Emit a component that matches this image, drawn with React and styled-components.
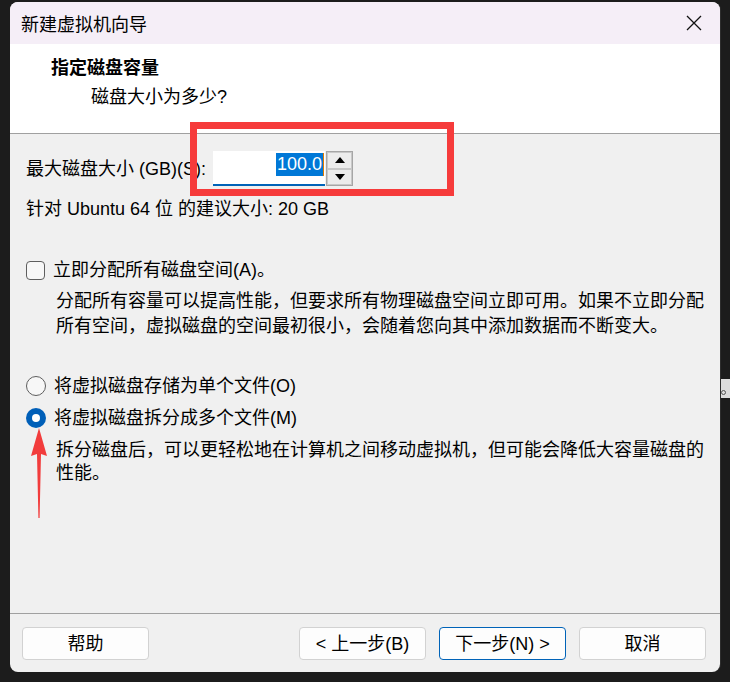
import React from "react";
import styled, { createGlobalStyle } from "styled-components";

const Global = createGlobalStyle`
  html, body { margin: 0; padding: 0; background: #1c1c1c; }
  body { font-family: "Liberation Sans", "Noto Sans CJK SC", sans-serif; }
  * { box-sizing: border-box; }
`;

const Page = styled.div`
  position: relative;
  width: 730px;
  height: 682px;
  padding: 2px 0 0 10px;
  background: #1c1c1c;
  overflow: hidden;
`;

const Window = styled.div`
  width: 710px;
  height: 670px;
  border-radius: 8px;
  overflow: hidden;
  display: flex;
  flex-direction: column;
  background: #f0f0f0;
  color: #000;
  font-size: 18px;
  box-shadow: 1px 0 0 #2e2e2e;
`;

const TitleBar = styled.div`
  height: 42px;
  flex: none;
  display: flex;
  align-items: center;
  justify-content: space-between;
  padding: 0 18px 0 11px;
  background: #f5eef7;
`;

const TitleText = styled.div`
  font-family: "Noto Sans CJK SC", sans-serif;
  font-size: 18px;
  line-height: 24px;
`;

const CloseIcon = styled.svg`
  width: 16px;
  height: 16px;
  display: block;
`;

const Header = styled.div`
  height: 90px;
  flex: none;
  background: #fff;
  border-bottom: 1px solid #a0a0a0;
  padding: 12px 0 0 41px;
`;

const HeaderTitle = styled.div`
  font-weight: 700;
  line-height: 24px;
`;

const HeaderSub = styled.div`
  margin-top: 5px;
  padding-left: 40px;
  line-height: 24px;
`;

const Body = styled.div`
  flex: 1;
  padding: 17px 16px 0 16px;
  display: flex;
  flex-direction: column;
`;

const SizeRow = styled.div`
  display: flex;
  align-items: center;
  height: 35px;
`;

const FieldLabel = styled.div`
  width: 187px;
  line-height: 24px;
  white-space: nowrap;
`;

const InputBox = styled.div`
  width: 112px;
  height: 35px;
  background: #fff;
  border-bottom: 2px solid #0063b8;
  display: flex;
  justify-content: flex-end;
  align-items: flex-start;
  padding: 2px 1px 0 0;
`;

const Selected = styled.span`
  background: #0078d7;
  color: #fff;
  line-height: 23px;
  height: 23px;
  padding: 0 1px;
`;

const Caret = styled.span`
  width: 1px;
  height: 23px;
  background: #e07b00;
`;

const Spin = styled.div`
  width: 27px;
  height: 35px;
  margin-left: 1px;
  border: 1px solid #a6a6a6;
  display: flex;
  flex-direction: column;
  background: #f3f3f3;
`;

const SpinBtn = styled.div`
  flex: 1;
  display: flex;
  align-items: center;
  justify-content: center;
  border: 1px solid #c8c8c8;
  background: #ececec;
`;

const Tri = styled.div`
  width: 0;
  height: 0;
  border-left: 5px solid transparent;
  border-right: 5px solid transparent;
  ${(p) => (p.$up ? "border-bottom: 6px solid #000;" : "border-top: 6px solid #000;")}
`;

const Line = styled.div`
  margin-top: ${(p) => p.$mt}px;
  line-height: 24px;
`;

const OptionRow = styled.div`
  margin-top: ${(p) => p.$mt}px;
  height: 24px;
  display: flex;
  align-items: center;
  gap: 8px;
  line-height: 24px;
`;

const CheckBox = styled.div`
  width: 19px;
  height: 19px;
  border: 1px solid #5e5e5e;
  border-radius: 4px;
  background: #f7f7f7;
`;

const Radio = styled.div`
  width: 20px;
  height: 20px;
  border-radius: 50%;
  display: flex;
  align-items: center;
  justify-content: center;
  ${(p) =>
    p.$checked
      ? "background: #005fb8; border: none;"
      : "background: #f7f7f7; border: 1px solid #5e5e5e;"}
`;

const Dot = styled.div`
  width: 8px;
  height: 8px;
  border-radius: 50%;
  background: #fff;
`;

const Desc = styled.div`
  margin-top: ${(p) => p.$mt}px;
  padding-left: 30px;
  line-height: ${(p) => p.$lh}px;
  white-space: nowrap;
`;

const Footer = styled.div`
  flex: none;
  height: 59px;
  border-top: 1px solid #a0a0a0;
  padding: 13px 14px 0 12px;
  display: flex;
  gap: 13px;
`;

const Button = styled.div`
  width: 127px;
  height: 33px;
  border-radius: 4px;
  background: #fdfdfd;
  border: 1px solid ${(p) => (p.$primary ? "#0063b8" : "#d2d2d2")};
  display: flex;
  align-items: center;
  justify-content: center;
  line-height: 24px;
`;

const Spacer = styled.div`
  flex: 1;
`;

const Highlight = styled.div`
  position: absolute;
  left: 190px;
  top: 122px;
  width: 264px;
  height: 74px;
  border: 7px solid #f63b3b;
  pointer-events: none;
`;

const Arrow = styled.svg`
  position: absolute;
  left: 29px;
  top: 428px;
  width: 20px;
  height: 92px;
`;

const Sliver = styled.div`
  position: absolute;
  left: 721px;
  top: 379px;
  width: 9px;
  height: 19px;
  background: #dcdcdc;
`;

const SliverDot = styled.div`
  position: absolute;
  left: 0px;
  top: 11px;
  width: 5px;
  height: 5px;
  border-radius: 50%;
  border: 1px solid #555;
`;

export default function App() {
  return (
    <Page>
      <Global />
      <Window>
        <TitleBar>
          <TitleText>新建虚拟机向导</TitleText>
          <CloseIcon viewBox="0 0 16 16">
            <path d="M1 1 L15 15 M15 1 L1 15" stroke="#111" strokeWidth="1.3" fill="none" />
          </CloseIcon>
        </TitleBar>
        <Header>
          <HeaderTitle>指定磁盘容量</HeaderTitle>
          <HeaderSub>磁盘大小为多少?</HeaderSub>
        </Header>
        <Body>
          <SizeRow>
            <FieldLabel>最大磁盘大小 (GB)(S):</FieldLabel>
            <InputBox>
              <Selected>100.0</Selected>
              <Caret />
            </InputBox>
            <Spin>
              <SpinBtn><Tri $up /></SpinBtn>
              <SpinBtn><Tri /></SpinBtn>
            </Spin>
          </SizeRow>
          <Line $mt={11}>针对 Ubuntu 64 位 的建议大小: 20 GB</Line>
          <OptionRow $mt={37}>
            <CheckBox />
            <span>立即分配所有磁盘空间(A)。</span>
          </OptionRow>
          <Desc $mt={7} $lh={25}>
            分配所有容量可以提高性能，但要求所有物理磁盘空间立即可用。如果不立即分配
            <br />
            所有空间，虚拟磁盘的空间最初很小，会随着您向其中添加数据而不断变大。
          </Desc>
          <OptionRow $mt={35}>
            <Radio />
            <span>将虚拟磁盘存储为单个文件(O)</span>
          </OptionRow>
          <OptionRow $mt={8}>
            <Radio $checked><Dot /></Radio>
            <span>将虚拟磁盘拆分成多个文件(M)</span>
          </OptionRow>
          <Desc $mt={9} $lh={23}>
            拆分磁盘后，可以更轻松地在计算机之间移动虚拟机，但可能会降低大容量磁盘的
            <br />
            性能。
          </Desc>
        </Body>
        <Footer>
          <Button>帮助</Button>
          <Spacer />
          <Button>&lt; 上一步(B)</Button>
          <Button $primary>下一步(N) &gt;</Button>
          <Button>取消</Button>
        </Footer>
      </Window>
      <Highlight />
      <Arrow viewBox="0 0 20 92">
        <path d="M10 0 L18 28 L12 26 L10.6 90 L9.4 90 L8 26 L2 28 Z" fill="#f23c3c" />
      </Arrow>
      <Sliver>
        <SliverDot />
      </Sliver>
    </Page>
  );
}
